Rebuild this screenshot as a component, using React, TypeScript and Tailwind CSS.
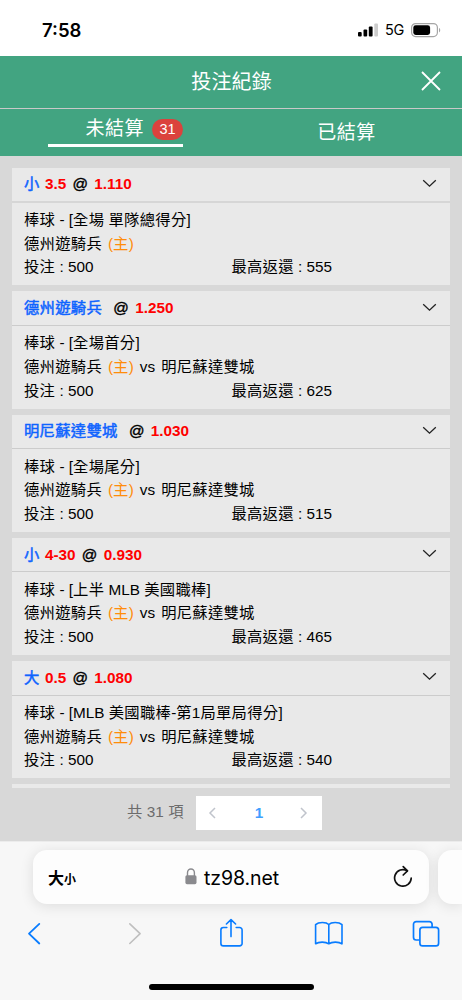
type Bet = {
    pick: string;
    line?: string;
    odds: string;
    market: string;
    home: string;
    away?: string;
    stake: number;
    payout: number;
};

const bets: Bet[] = [
    { pick: "小", line: "3.5", odds: "1.110", market: "棒球 - [全場 單隊總得分]", home: "德州遊騎兵", stake: 500, payout: 555 },
    { pick: "德州遊騎兵", odds: "1.250", market: "棒球 - [全場首分]", home: "德州遊騎兵", away: "明尼蘇達雙城", stake: 500, payout: 625 },
    { pick: "明尼蘇達雙城", odds: "1.030", market: "棒球 - [全場尾分]", home: "德州遊騎兵", away: "明尼蘇達雙城", stake: 500, payout: 515 },
    { pick: "小", line: "4-30", odds: "0.930", market: "棒球 - [上半 MLB 美國職棒]", home: "德州遊騎兵", away: "明尼蘇達雙城", stake: 500, payout: 465 },
    { pick: "大", line: "0.5", odds: "1.080", market: "棒球 - [MLB 美國職棒-第1局單局得分]", home: "德州遊騎兵", away: "明尼蘇達雙城", stake: 500, payout: 540 },
];

// Chinese runs are set slightly wider than the latin text around them
function Mixed({ text }: { text: string }) {
    return (
        <>
            {text.split(/([\u4e00-\u9fff]+)/).map((part, i) => (
                <span key={i} className={i % 2 ? "tracking-[0.3px]" : ""}>{part}</span>
            ))}
        </>
    );
}

function StatusBar() {
    return (
        <div className="h-14 shrink-0 flex items-start justify-between bg-white pl-[42px] pr-[21px] pt-[18px]">
            <span className="font-['Inter',sans-serif] text-[18.5px] leading-6 font-semibold">7:58</span>
            <div className="flex items-center h-6">
                <svg width="21" height="14" viewBox="0 0 21 14">
                    <rect x="0" y="9" width="3.7" height="4.5" rx="1" />
                    <rect x="5.5" y="6.6" width="3.7" height="6.9" rx="1" />
                    <rect x="10.8" y="3.6" width="3.8" height="9.9" rx="1" />
                    <rect x="16.3" y="0.4" width="3.7" height="13.1" rx="1" fill="#cccccc" />
                </svg>
                <span className="ml-[6px] w-[21px] font-['Inter',sans-serif] text-[14.5px] tracking-[-0.3px]">5G</span>
                <svg className="ml-[5px]" width="30" height="15" viewBox="0 0 30 15">
                    <rect x="0.6" y="0.6" width="25.8" height="13" rx="4" fill="none" stroke="#a5a5a5" strokeWidth="1.2" />
                    <rect x="2.3" y="2.3" width="16.8" height="9.7" rx="2.4" />
                    <path d="M28 5v4.4c1.6-.6 1.6-3.8 0-4.4z" fill="#a5a5a5" />
                </svg>
            </div>
        </div>
    );
}

function BetCard({ bet }: { bet: Bet }) {
    return (
        <div className="group h-[117.25px] shrink-0 bg-[#e9e9e9]">
            <div className="flex items-center justify-between h-[34.5px] border-b border-[#cccccc] group-first:border-b-2 group-first:border-[#d6d6d6] pl-3 pr-[13px]">
                <div className="flex items-center gap-[6.3px] pt-px">
                    <span className={`text-[#0f64ff] tracking-[0.3px] [-webkit-text-stroke:0.5px_#0f64ff] ${bet.line ? "mr-[-1px]" : "mr-[5px]"}`}>{bet.pick}</span>
                    {bet.line && <span className="text-[#ff0000] font-bold">{bet.line}</span>}
                    <span className="[-webkit-text-stroke:0.4px_#000]">@</span>
                    <span className="text-[#ff0000] font-bold">{bet.odds}</span>
                </div>
                <svg className="mb-[2px]" width="15" height="9" viewBox="0 0 15 9" fill="none" stroke="#222" strokeWidth="1.3">
                    <path d="M1.2 1.2l6.3 6 6.3-6" />
                </svg>
            </div>
            <div className="px-3 pt-[5.6px] leading-[23.6px]">
                <div><Mixed text={bet.market} /></div>
                <div className="flex gap-[6px]">
                    <span><Mixed text={bet.home} /></span>
                    <span className="text-[#ff8c0a]"><Mixed text="(主)" /></span>
                    {bet.away && <span>vs</span>}
                    {bet.away && <span><Mixed text={bet.away} /></span>}
                </div>
                <div className="flex">
                    <div className="w-[207.4px]"><Mixed text={`投注 : ${bet.stake}`} /></div>
                    <div><Mixed text={`最高返還 : ${bet.payout}`} /></div>
                </div>
            </div>
        </div>
    );
}

function Pagination() {
    return (
        <div className="flex items-center mt-2 ml-[127px] text-[#6c6c6c]">
            <div className="w-[69px]"><Mixed text="共 31 項" /></div>
            <div className="flex items-center justify-between w-[126px] h-[34px] bg-white px-3">
                <svg width="9" height="12" viewBox="0 0 9 12" fill="none" stroke="#c0c4cc" strokeWidth="1.5">
                    <path d="M7 1L2 6l5 5" />
                </svg>
                <span className="text-[#409eff] font-bold ml-[3px] pt-px">1</span>
                <svg width="12" height="12" viewBox="0 0 12 12" fill="none" stroke="#c0c4cc" strokeWidth="1.5">
                    <path d="M3 1l5 5-5 5" />
                </svg>
            </div>
        </div>
    );
}

function BrowserBar() {
    return (
        <div className="h-[159px] shrink-0 bg-[#f7f7f7] border-t border-[#ececec] pt-2">
            <div className="flex gap-[9px] pl-[33px]">
                <div className="flex items-center shrink-0 w-[396px] h-[54px] rounded-[14px] bg-[#fdfdfd] shadow-[0_2px_14px_rgba(0,0,0,0.11)] pl-[15px] pr-4">
                    <div className="w-[137px] leading-6 pt-[2px] font-bold font-['Noto_Sans_CJK_TC',sans-serif]">
                        <span className="text-[16px]">大</span>
                        <span className="text-[12px]">小</span>
                    </div>
                    <svg className="mb-[2px]" width="12" height="17" viewBox="0 0 12 17">
                        <path d="M2.5 8V4.8a3.4 3.8 0 016.9 0V8" fill="none" stroke="#8a8a8e" strokeWidth="1.4" />
                        <rect x="0.4" y="7.2" width="11.1" height="9" rx="1.6" fill="#8a8a8e" />
                    </svg>
                    <span className="ml-[7px] pt-[3px] font-['Inter',sans-serif] text-[19.5px] tracking-[-0.1px]">tz98.net</span>
                    <svg className="ml-auto" width="20" height="24" viewBox="0 0 20 24" fill="none" stroke="#111" strokeWidth="1.7" strokeLinecap="round" strokeLinejoin="round">
                        <path d="M14.2 5.8A8.3 8.3 0 1018.2 13.2" />
                        <path d="M10.2 1.6l4.3 4.2-4.3 4.2" />
                    </svg>
                </div>
                <div className="w-6 h-[54px] rounded-l-[14px] bg-[#fdfdfd] shadow-[0_2px_14px_rgba(0,0,0,0.11)]" />
            </div>
            <div className="flex h-[30px] mt-[14px] pl-[27px] text-[#087cff]">
                <svg width="15" height="30" viewBox="0 0 15 30" fill="none" stroke="currentColor" strokeWidth="1.8" strokeLinecap="round" strokeLinejoin="round">
                    <path d="M12.3 5.9L2 15.7l10.3 9.8" />
                </svg>
                <svg className="ml-[85px]" width="15" height="30" viewBox="0 0 15 30" fill="none" stroke="#bfbfbf" strokeWidth="1.6" strokeLinecap="round" strokeLinejoin="round">
                    <path d="M2.8 5.9l10.3 9.8-10.3 9.8" />
                </svg>
                <svg className="ml-[77px]" width="24" height="30" viewBox="0 0 24 30" fill="none" stroke="currentColor" strokeWidth="1.6" strokeLinecap="round" strokeLinejoin="round">
                    <path d="M7.8 9.5H4.4a2.5 2.5 0 00-2.5 2.5v13.4a2.5 2.5 0 002.5 2.5h16.2a2.5 2.5 0 002.5-2.5V12a2.5 2.5 0 00-2.5-2.5h-3.4M12 18.6V1.8M7.4 6l4.6-4.4L16.6 6" />
                </svg>
                <svg className="ml-[71px]" width="30" height="30" viewBox="0 0 30 30" fill="none" stroke="currentColor" strokeWidth="1.6" strokeLinecap="round" strokeLinejoin="round">
                    <path d="M14.8 6.6v19.2M14.8 6.6C12.3 3.7 4.6 3.7 1.6 6.6v19.2c3-2.3 10.2-2.3 13.2 0 3-2.3 10.2-2.3 13.2 0V6.6c-3-2.9-10.7-2.9-13.2 0z" />
                </svg>
                <svg className="ml-[68px]" width="29" height="30" viewBox="0 0 29 30" fill="none" stroke="currentColor" strokeWidth="1.7" strokeLinecap="round" strokeLinejoin="round">
                    <path d="M7 22H4.2a2.7 2.7 0 01-2.7-2.7V6.3a2.7 2.7 0 012.7-2.7h13.2a2.7 2.7 0 012.7 2.7V9" />
                    <rect x="7.9" y="9.4" width="18.7" height="18.5" rx="2.7" />
                </svg>
            </div>
            <div className="w-[165px] h-[6px] rounded-full bg-black mx-auto mt-[36px]" />
        </div>
    );
}

export default function App() {
    return (
        <div className="flex flex-col w-full h-[1000px] overflow-hidden bg-[#d8d8d8] text-black text-[15.3px] font-['Liberation_Sans','Noto_Sans_CJK_TC',sans-serif]">
            <StatusBar />

            {/* Title */}
            <div className="flex items-center justify-end h-[52px] shrink-0 bg-[#42a481] text-white pr-[21px]">
                <div className="text-[20px] tracking-[0.2px] mr-[149px]">投注紀錄</div>
                <svg className="mb-[2px]" width="20" height="20" viewBox="0 0 20 20" fill="none" stroke="white" strokeWidth="1.8">
                    <path d="M1 1l18 18M19 1L1 19" />
                </svg>
            </div>

            {/* Tabs */}
            <div className="flex h-12 shrink-0 bg-[#42a481] border-t border-[#c9c9c9] text-white text-[19px] tracking-[0.5px]">
                <div className="w-[231px] pl-12">
                    <div className="flex items-center justify-end w-[135px] h-[38px] pt-[6px] border-b-[3.5px] border-white">
                        <span>未結算</span>
                        <span className="flex items-center justify-center w-[31px] h-[21px] ml-2 rounded-full bg-[#db423d] text-[14.5px] tracking-normal">31</span>
                    </div>
                </div>
                <div className="flex items-center justify-center w-[231px] pt-px">已結算</div>
            </div>

            {/* Bets */}
            <div className="flex flex-col gap-[6px] h-[631.5px] shrink-0 overflow-hidden px-3 pt-3">
                {bets.map((bet, i) => (
                    <BetCard key={i} bet={bet} />
                ))}
                <div className="h-[10px] shrink-0 bg-[#e9e9e9]" />
            </div>

            <div className="flex-1">
                <Pagination />
            </div>
            <BrowserBar />
        </div>
    );
}
